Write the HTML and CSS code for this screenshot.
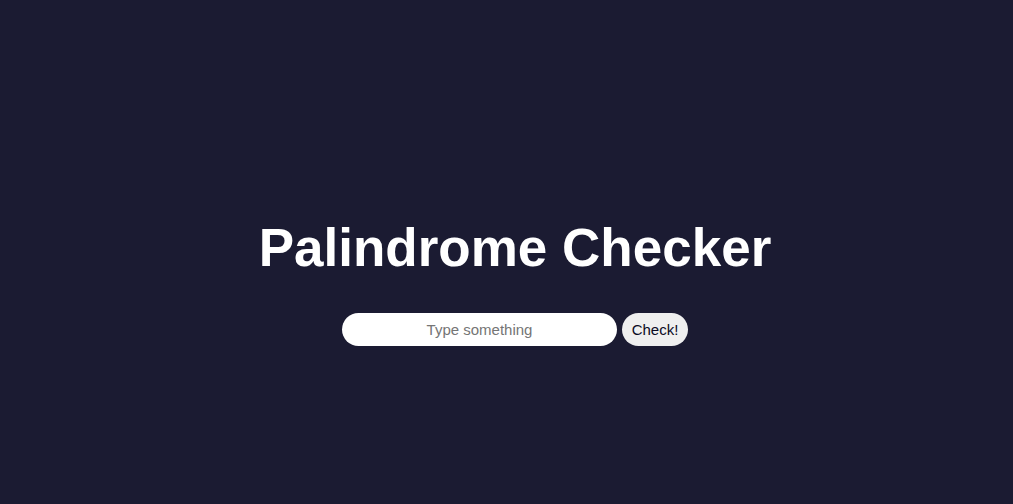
FILE: index.html
```html
<!DOCTYPE html>
<html lang="en">
<head>
<meta charset="utf-8">
<title>Palindrome Checker</title>
<link rel="stylesheet" href="styles.css">
</head>
<body>
<main class="app">
  <h1 class="title">Palindrome Checker</h1>
  <form class="checker" onsubmit="return false;">
    <input class="text-input" type="text" placeholder="Type something">
    <button class="check-btn" type="submit">Check!</button>
  </form>
</main>
</body>
</html>
```

FILE: styles.css
```css
* { box-sizing: border-box; }
html, body {
  margin: 0;
  padding: 0;
  background: #1b1b32;
  height: 100%;
}
body {
  font-family: "Liberation Sans", Arial, sans-serif;
}
.app {
  display: flex;
  flex-direction: column;
  align-items: center;
  padding-top: 216px;
  padding-left: 17px;
}
.title {
  margin: 0;
  color: #ffffff;
  font-size: 53px;
  font-weight: bold;
  line-height: 64px;
}
.checker {
  display: flex;
  gap: 5px;
  margin-top: 33px;
}
.text-input {
  width: 275px;
  height: 33px;
  border: none;
  border-radius: 17px;
  background: #ffffff;
  text-align: center;
  font-family: "Liberation Sans", Arial, sans-serif;
  font-size: 15px;
  color: #333;
  outline: none;
  padding: 0 10px;
}
.text-input::placeholder { color: #757575; }
.check-btn {
  width: 66px;
  height: 33px;
  border: none;
  border-radius: 17px;
  background: #efefef;
  color: #0a0a23;
  font-family: "Liberation Sans", Arial, sans-serif;
  font-size: 15px;
  padding: 0;
  cursor: pointer;
}
```
